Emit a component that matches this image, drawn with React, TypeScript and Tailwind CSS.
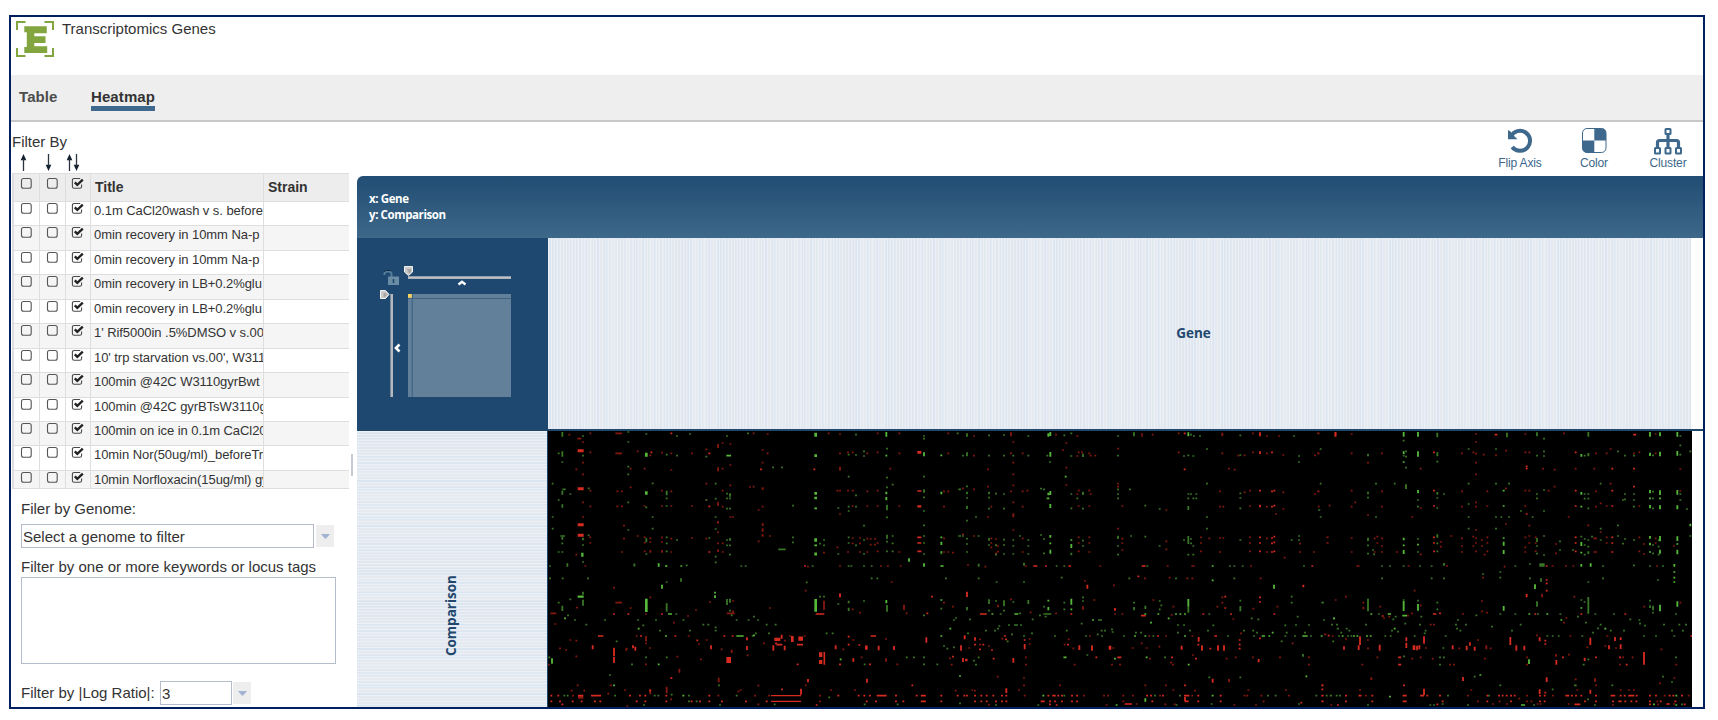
import React from "react";

const titles = [
  "0.1m CaCl20wash v s. before",
  "0min recovery in 10mm Na-p Buffer",
  "0min recovery in 10mm Na-p Buffer",
  "0min recovery in LB+0.2%glu",
  "0min recovery in LB+0.2%glu",
  "1' Rif5000in .5%DMSO v s.00",
  "10' trp starvation vs.00', W3110",
  "100min @42C W3110gyrBwt vs",
  "100min @42C gyrBTsW3110gyr",
  "100min on ice in 0.1m CaCl20",
  "10min Nor(50ug/ml)_beforeTreat",
  "10min Norfloxacin(15ug/ml) gyrA",
];

/*
 * Heatmap cells, grouped by column: "<tone><x>[*width]:<y>[/height],…".
 * Tones: R/r bright and dim red, G/g bright and dim green.
 * Units are thirds of a pixel; every block of columns has its own x origin.
 */
const blocks: { x: number; cells: string }[] = [
  {
    x: -24,
    cells: `g67:43/14,102/16,126,218/12,258/10,355/8,370,396,565/16 R122*18:92/9,206/9,314/9,346/9 r129:66,128,163,247,291 G127*7:404/12 g129:48,107,357/8,375,426,520/9,548/18 G122*18:530/7
r118*12:56 r122*16:832/9 r151:40,97,212,259,352,369 r88:44 r109:148,404 g38:191,291,326 g56:100,240,396,548 g72*10:208 g68*14:348 g91:222,538 g146:205,346 r236*20:40,100 r232:214,259 r246:214,259,396 g265:36,66,140,163,247,330 r272:146,202,564 r293:94,348 r252:317,356
r314:146,258,352,368,394 G319*8:104/12,219/10,556/40 g319:42,262,361/12,402 R334:97 r331:106,355,366,394/8,532,815/16 g338:190,291,326 r366:98,212,258,352,366,394/8 G366:500/12 g380:104,219/14,235,258,352,370,394,438,486,562/25 r394:100,150,214,258,356,396 R394:40,774 g411:48,107,360 r456:100,258,354 g450:42
r499:88,191,240,356 g499:110,240 R508:100,259,396 g508:354 r534:78/12,148/12,252/12,307/8,337,370,392/8 g527:191,236,291,327,410,427 G525:518,530/8 r548:69,146,212,260,370,396 g561:48,221,235,266,360,376,546/18 G566*14:107 g570:225/10,235,266,358/8,376,404,542/12,572 r571:72,135,196,291 r579:291,543,574 r536:780/14 g537:796
g624:40 r641:40,200 r630:201 R663:148 r668:90,128,206/8,260,314/8,330/10,346/8 r683:42,100 r656:270,364 g699:142 g726:142 r690:348,564 g726*22:388 g759:257,352,367 g604:438 g617:438
G827*8:44/12,107/8,220/8,234/8,265,360/10,376,402/9,556/38 R823:148 r866:40 R840*26:582 g840:371,530 g852:360,376,530 r852:398,556/28 r900:42,100,146/12,212,282,438 R900:526/12 g895:264,402,552 r892:212,382 r924:97,212,396 g926:104,170,260,273,352,369,438,546/8,568/10 r938:97,212,258,354,370,568 g948:44,105,226,260,376 r960:354,370,396,578 g972:94,108,317,360,402,438,543 r982:100,214,258,356,396 r992:357,374 r1005:357,374 r1013:40,97,212,258,369,394
G1039:43/14,107,219/8,236/10,545/10 g1041:86,173,202,260/12,268,292,350/12,365,394,565/20 g1058:194,348,370,394 r1078:40,100,258,396 R1138*12:97/8,213,259/7,352,369,394 G1152:103/12,435/10 g1152:48,56,170,213/10,232,273,316,348,369,402,586 G1107:420/10 r1082:438 r1051:146 g995:438,475 r1023:438 r1044:438
g30:438,475 g82:435/10 g68:475 r136:438 g283:435/9 G356:435/10 G378:438 G424:438 g440:436 g423:480/10 g144:475 r222:503 R795:438 g818:438 g800:487 r797:512 r1055:486 g934:438 r804:440 g1012:475 R1176:530
r40*18:580 G75:595 g84:586 r46:612 g105:600 g195:600 R222:582,696/25,720/18 R265:582 r236*20:548 g294:600 g310:616 r318:582,656/16,670 g348:600 R366:582 G390*12:582 g409:582 g430:600 r402:608 g139:614 R182*16:648 G296:626 g490:614 g505:614 g527:622,632 r444:588 r468:570 r510:546 r572*24:580 g590:600 g575:586 g626:600 g642:590 g654:600 g680:614 g707:614 r690:564 g360:632 g450:632 g648:640 g687:640 G378:648 G600*22:648 R553:648 R578:648 r290:648 R303:648 R406:648 r446:648 g638:648 G642:646
r91:660 r109:662 R158:682/12 r60:685 r78:690 r109:709 r111:563 g230:664 R279:680/9 R286:686/12 r260:686 r258:690 r330:684 R472:661 r477:672 R513:682/12 r500:660 R621:656/9,684/12 r545:688 r575:694/10 r623:706 R566*14:720/18 R700:684/16 R712*18:658/10 R725:650/12 R734:684/14 R757*8:657/18 R782*14:656/13 R708:670 R718*18:674 R780*18:674 r735:662 r750:648 r672:670 r794:648 R842*10:704/14,726/12 R853*5:715/38 R887:682/12 R979*8:683/13 R1016:684/14 R926:650,674 r940:660 R958:675 r910:688 r1038:657,720/10 g860:640 g878:640 R1000*16:648 R1159:660/16 r1092:562/16 R1062:684/12 r1100:580 R1162:580
G36:723/16 g28:712 r27:734 R55:827 g73:827 g83:827 r99:827 R34:827,844 R122*16:827 R168*30:827 g225:827 R270:827 R300:827 R316:827,844 g344:827 g355:827 R379:827,844 g395:824 r380:810/20 r393:838 G430:827 g447:827,844 g470:844 R508:827,844 r535:827 g590:827 R618:844 r645:827 R738*90:827/4,844/4 R783:815/18 R726:808 r687:827 R60:844 R98:844 R125:844 R165:844 R181:844 R290:844 R455:844 R480:844 R546:844 R680:844 r840:827,844 R895:827 R956:827 R973:827 R990:827 R1025*30:827 R1068:827,844 R1090:844 R1130:827 R1150*15:827,844 R980:844 R1008:844 R830:855 g540:855 g312:855 R67:853 r655:853 g704:853 r262:858 g974:853 g1073:853
g210:765 r418:752/12 r394:774 G222:796 r213:796 r113:796 r205:821 r255:810 r133:812 r95:812 R330:812 r655:797 R804:782/10 R981:782/12 r797:796 R1117:796 r602:810 r595:814 r873:810 g868:832 r945:810 G356:733 g380:712 r318:733 g276:733 g318:712 r483:718 R773:733 R900:733 G902:718 R940:720/10 r965:712 R990:733 g1152:712,733 g1100:712 g1122:712 g974:733 r412:710 r1072:733 g1192:733`,
  },
  {
    x: 1176,
    cells: `G4:106,219/8,352,370/10,396,540 g4:400,566 r12:214,260,355,396,548 g81:45/10,103/12,199,219/8,234,262/10,302,356,372,396,566/10 R81:523/16 r25:40,100,214,396 r39:398,560 g53:40 g69:107,348 g59*8:208,348 r69:205,343 r102:48,107,208,348 g108:291 g116:348,434,475 g147:46,107,219/8,233,266,358/8,375,545/14,572 r144:148,200,291 r154:260,355,369,382 r168:357,375,400 g168:221,376,404,543 r174:378,395,558/8 g192:45,107,222,266,359,375,402,550/18,572 r213:43/12,100,214,538 r220:66,128,163,196,247,286/12,330 g220:107,360,378,402,546 g240:348 r248:100,214,260,355,396 g252:433/9,486 g265:48,107,360,378,402,546/12 r262:212
g303:206,345 g312:208,357,400,560 G325:45/10,222/8,235,542,566/10 G331:42/12,103/14,219/12,258/12,349/8,370,395/12 g322:107,235 g330:126 r348:44 g373:46,548,568 r369:90 r379:69,143,195 G377:170 g394:40,108,222,265,402/8 G394:378/12,360,545/18,568 r412:48,108,222 g412:235 r416:97,212,258,352,369,394 g429:106/10,220/10,266,362,378,532,543 r429:564/10 r426:97 r448:100,212,258,352,369,396 r452:107,222 r466:107
g534:48,107,208,222,235,352/10,378,404 r534:86,191,200,326 g570:208 g573:348 r547:258,356,369,390 g582:43/12,548,566/10 r606:42,48 r638:44 g616:257,350,562/10 r679:270,364,388 g659:267,378,543,568 r716:40,97 R734:40,148 G745:43/12,548/22 g745:106,222,235,264/12,360/24,404,566/16 g753:44,222,357,370 g760:108,235,378,404 g769:222,235 g762:48 g780:48 r783:352,369,394 g732:108,360 g801:87,191,291,326 r808:355 r847:43/10,100,532,548 r840:214,260,354,396 r850:260,354 g901:46,105,220,234,265,360,542,566/16 r867:146 r884:149 r895:107 r914:106,217
r939:40,97 r930:212,258,352,369,394 R960:43/12,98/8,258/8,352,369,394,532,546 R960:212 r981:48,100,260,355,396 R996:97,214,260,354,370,396 R1003:212,257,350,367,394 r1017:48 r1030:105,217,267 r1008:282 g1062:48 g1077:108,126,348,360 r1080:371,396 r1134:40,100,214 r1125:106,222 g1142:87,191,291 g1137:270 R1187:43/12 r1169:257 r1162:352,369 r1122:396 r1034:413 g1055:360,530,548 r1187:540
G6*10:438 r84:435 g116:438 r136:440 r258:438 R286*12:438 R318:438 g350:438 g373:438 R389*8:438 r481:438 R611*12:438 g622:438 r683:438 r759*10:438 G818:438,481 g870:438 g883:438,475 g908:438 r933:438 g1092:438 R1117:438 g18:475 g170:486 g365:473 r435:483 R442:500/12 r522:496 g568:475 R595:469 r615:475 r689:473 g708:475 r742:475 r757:475 r962:475 G1002:500/12 R1090:498/8
R525:568/8 r463:540 r640:540 g664:556 r700:560 g745:576 R856:530,564 r832:560 g1147:548 r1012:560 R130*20:582 G157:582 g182:582 G229*12:582 g240:580 r272:577 g300:586 g322*24:582 r348:580 R394:582 r525:582 r547:582 R610*14:587 G616:582 G655:582 G708:582 G721:582 G735:582 r695:585 R790:582 g808:582 R873:582 g820:616 G686:595 g42:600 g48:594 g90:598 g278:598 g317:590 G459:600 g480*12:600 G633:608 r880:597 g935:595 r940:566 g955:598 R1003:582 g1073:590 g1182:595 g1152:600 G31:626 g178:618 g174:626 g228*12:615 g207:615 g243:615 g425:611 g714:615 g732:615 g1036:616 g1068:615 g1107:615 g1193:626
g84:640 g138:632 g165:632 g276:640 g380:632 g485:632 g495:632 g516:628 g518:636 g588:638 g603:638 g714:638 g750:632 g804:632 g912:632 g940:632 g951:638 G998:638 g1040:638 g1095:638 g216:643 G4:648 g252:648 g345:648 g438:648 r450:648 g473:643 g486:648 g552:648 G585:648 G616:648 r628:648 g640:648 R654:648 r678:648 G735:648 R827*8:648 g864:648 g942:648 G970*10:648 G988:648 g1036:648 g1065:648 G1095*16:648 g1113:648 r1155:643 r1178:648 r757:648 r903:640
R74:652/12 R105:657/10,674 r120:658,674 R63:684/16 R120:688 g12:678 g22:686 g42:682 r88:684 r147:678 R130:674 R156:690 r187:656 R195:648 R198:658 g203:664 R254:660,680/16 r269:657,672 r386:658 R384:674 r374:674 r400:685 R418:683/14 R456:684/16 R510*8:683/12 r520:684 r578:684 r605:670 r620:684 r658:680 R725:683/12 R776:658/14 R775:674 R786:684/16 R811:686 R834:684/16 R852:684/16 R899:660,674,686 R960:655 g1025:664 r1058:670
R69:720/12 R79*7:720/8 r30:715 R39:710 r35:734 g102:722 g108:734 g116:712 R161:716 R220:721/14 r258:712,734 G375*9:712 g442:705 R469:712 r404:734 G525:716 R538*12:712 r516:734 r540:734 G620:712 r630:716 g675:712 R696:712 r693:728 r699:734 G746:734 R768:716 r759:705 r860:716 r887:712 r939:712 R956:722/10 r1020:712 g1089:706/8 r1107:712,734
G60:768 r173:770 r252:774,796 r360:796 R818:782/12 r867:782/10 g808:772 g901:772 G1099:769 r616:796 r678:796 R735:796 R1147:796,808 r47:812 r97:810 r105:812 R199:812/14 r237:810 r700:810 r765:812 r925:810 r1038:810
R4:827,844 R53:827 R73:827 R81:827 R105:827,844 R124:827,844 R140:827,844 R160:827 R186:827 R199:827,844 r254:827 G310:827 R325:827 R342*10:827 R355:827 R366:827 g373:827 R396:827,844 R411:827,844 r432:827 r492:827 r504:827 r550:827,844 r579:827 R621:827 R633:827 g645:827 r660:827 R669:827 g720:827 R740*16:827 r757:827 R775:827,844 G818:827 R842:827,844 r914:827 r922:827 r964:827 g984:827 g1007:827 r1047:827 g1129:827 R1147:827,844 g1160:827 g1172:827 g1190:827 R168:844 R186:844 R308*12:844 R330:844 R345:844 R366:844 G616:840/10 R637:844 R735:837/12 R740*12:844 r971:844
g60:850 r147:854 g168:855 R330:853 R350:855 g295:855 r500:855 G530:855 R565*22:852 r590:852 r676:853 r704:853 g710:855 g815:852 r883:855 r948:855 g1077:852 R1084:848 r1174:855 R1194:855`,
  },
  {
    x: 2310,
    cells: `R52:43/14 r2:40,100,214,260 g8:87,191,291 g4:270 r35:257 r29:352,369 r101:42,100,212,260,354,396 r112:247 g150:105/8,219/8,233,358/10,376,401,555/38 r150:128,285 r170:355,396 g174:191,291 r178:350,369 r192:100,214,260,355,378,396 g168:403 g165:390 g192:438,475 g230:191 G257:43/14,98/8,126,357/8,376,396/12,558/30 g257:62,107,438,540 g264:94,110,143,200/14 r237:396 r283:291 r308:146,264,403 G300:43/14,102/16,215/10,374,562/20 g300:240,260,357,396,542 g306:438 g341:438 R348:97,212,258,352,369,394
g358:45/14,103/12,125,220/8,234,264,348/10,370,394,548,568 r369:366,380 g378:222,433/8,475 r387:438 r400:348 r432:100,214,260,355,378,396 g452:87,191,252,291,326 r466:97,350,378 r474:42,66,101,128,163,247,260,330,354,369,394 r497:104 r508:214,258,352,369,394 r492:360,378,543,574 r500:404 R534*8:44 g534:87,191,291,326 r534:106 r564:92,205,312 G557:212,258,354,371/12,396/12,565/14 g567:45/14 g550:291 g573:191,291 g592:438 r560:440 g609:273 g547:456,473 g495:462 r495:473
r622:42,97,212,258,352,382,396 R626:139,146,282,527/10 g657:43/12,107,222,235,360/12,378,401,552/16 r634:97,212,317,348,369 r653:352,369,394 g636:432,475 g644:291 g678:56,94,108,210,273,348,405 r675:146 r710:149,200 r692:212 r714:372,400 g726:364,390 r738:40 R686:438,480,490,512 r704:438 r744:438 r766:438 g672*16:435/10 g669:480/10 G651:500/14 r672:527/10 r752:291 g765:390
R773:97,212,258,352,369,394 r773:146 G790:106/8,220/8,260,372/12,398,436/8,564 g790:350,540 g800:107,222,236,357,375,404,546 g811:43/14,104/10,222,236,265,360,380,398/8,486,556/50 G818:435/10 r811:316 r829:146,355,396 r834:100,214,260,355,396 g822:350 g848:191,326,360 r848:250,336 r866:100,258,352,369 R883:146,212,258,352,369,396 r878:87,191 g855:438,475 g900:94,316,348 g921:107,222,238,357 g915:240,371 R950*9:44 R948:146,200 r948:100 g948:107,222,240,260,360,436 r964:97,258,352,394 r978:372,402
G996:43/14,103/10,215/10,235,260/10,352/8,372/8,396 g1005:106,215,235,265,375,400,564/14 g996:438,542,560/8 r1013:42,100,355,369 G1026:43/12,102/14,218/14,235,262/12,356/16,395/12,564/20 g1022:360,380,404 g1020:480 r1017:438 g1035:438 G1078:43/14,100/14,217/14,262/12,356/14,372,396/14,552/16 g1087:48,76,104,222,240 r1087:147,213,548 g1107:267 G1117:315/8 g1117:94,348 r1068:378 G1069:436/8,456,473,486
r118:438 r122:438 g216:438 r272:438 r84:530 r136:548,564/8 r187:560 r290:512 r308:556 r769:530 r979:560 g341:475 g15:548
g18:600 G48:595 g42:614 g57:614 g60:626 g86:626 g94:632 r22:643 R32:647 g70:638 G11:648 g63:648 G74:648 g90:648 g100:648 G108:648 G118:648 G147:648 G158:648 g202:648 g218:648 g144:614 G160:582 g183:582 G214*10:582 R194:588 r198:594 r214:590 g233:590 g226:598 G230:626 g222:632 g240:635 G260*14:587 g262:611 r270:587 r282:580 g310:590 g306:614 R350*10:582 R366:580 g323:632 r338:614 r348:614 R318:660/22 g290:648 g320:640 g383:648 g414:614 g420:600 g417:626 g427:632 r435:582 g444:614 g475:586 r507:578 g522:620 g547:582 g592:582 g582:632 g608:614 G634:582 R652:582 g660:582 G688:582 g727:582 G730:600 r738:608 r745:594 g804:608 g780:590 R790:582 g832:582 G862:626 g848:614 g840:625 g878:632 R922:582 g888:582 g918:632 g937:598 g964:600 g966:611 g981:617 g1005:578 g1038:614 g1062:632 g1074:582 g1084:614 g1104:614 g1095:632 g825:638 r657:646 g688:648 g704:648 g722:648 r757:648 g793:648 r868:648 g978:648 g1014:648 g1069:648 R1120:648
R126:662/26 R122:683/14 g46:664 r84:657 R78:684/10 r150:660,685 R185:683/18 R265:658/12,676/16 R288*8:683/14 R297:684/14 R304:682/12 r324:684 g376:684 R404:682/12 r424:685 R446:684/14 R456:672/10 R470:686/12 r480:660 r505:682/12 r518:685 R577:663/24 R595:684/16 R619:684/14 R665:658/12 R682:662,672 r714:706/8 R817:664/22 r808:682 R873:682/12 R891:657/12 R908:656/8,680/14 r862:678 r894:684 R978:715/38 r1030:688
r133:734 r178:712 R245*9:712,734 g258:709 r283:716 r308:712 r344:716 g366:712,734 g378:712 r396:734 r408:734 r501:716 r627:712,734 G633:725/14 R715:727/14 R735:712 r753:704 R800:718/10 g811:718 R834:712 g797:734 R906:712 r906:734 R926:734 r915:712 r944:712 g1074:712 r1075:734
r160:776/8 r14:796 g470:770 G487:765 R435:777/12 R686:779/14 R258:796 r126:810 R318:816/20 R665:815/14 R682:818 r460:810 g547:796 g704:808 r773:778 r831:780/12 g772*8:796 r834:796 g883:796 R817:815/12 r908:810 g1035:770 r1069:774 r1026:790 g1062:786 r778:810 r933:810 r948:810
R14:827,844 g26:827 g39:827 g66:827 R84:827,844 R126*9:827 r144:827 R163:827,844 G216:830 R260*12:827,844 R312*12:827 R328:827 R366:827 R374:844 g390:827 r450:827 r480:844 R508:827,844 g513:827 R543:827 R554:827 R566:827 R579:827,844 R590:827 r545:844 r604:836 r627:827,844 r640:844 R666:827,844 R680:827,844 r705:827 R748*12:827 R762:827 R774:827 R790:827 R801:844 g810:838 R834:827,844 R885*14:827 R908:827,844 R920:827 R940*18:827 R956:827 R885:844 R905*8:844 R922:844 R940:844 R955:844 R996:827,844 R1014:827 R1028:844 r1040:827 R1055:827 R1066:827 G1075:827 R1092:827 r1112:827 R1072:844 r1018:844
g150:855 g337:855 g348:855 R358:853 g374:852 g450:855 r525:852 r567:852 G615*12:855 g648:855 r659:852 r668:852 r752:852 R778*18:853 g831:855 r885:855 R996:853 G1008:853 r1020:853 R1050*10:852 r1068:852 G1075:855 g1092:853 R1100:853`,
  },
];

const tones: Record<string, string> = {
  r: "#84190f",
  R: "#d62b20",
  g: "#387526",
  G: "#56b83b",
};

function buildPaths() {
  const paths: Record<string, string> = { r: "", R: "", g: "", G: "" };
  for (const block of blocks) {
    for (const column of block.cells.split(/\s+/)) {
      const [head, list] = column.split(":");
      const tone = head[0];
      const [cx, w] = head.slice(1).split("*").map(Number);
      const width = w || 5.5;
      for (const cell of list.split(",")) {
        const [cy, h] = cell.split("/").map(Number);
        const height = h || 5;
        paths[tone] += `M${block.x + cx - width / 2} ${cy - 33 - height / 2}h${width}v${height}h${-width}z`;
      }
    }
  }
  return paths;
}

const paths = buildPaths();

function Heatmap() {
  return (
    <svg className="block h-[276px] w-[1144px] bg-black" viewBox="0 0 3432 828">
      {Object.keys(tones).map((tone) => (
        <path key={tone} d={paths[tone]} fill={tones[tone]} />
      ))}
    </svg>
  );
}

/* Axis label background made of hairlines of slightly different blues. */
function Stripes({ vertical }: { vertical?: boolean }) {
  const count = vertical ? 1143 : 276;
  const shades = ["#dde6f0", "#e7ebf2", "#e6e9ed", "#d9e5f1", "#e4eaf2", "#e0e7ef", "#e4e9f1"];
  const lines = [];
  for (let i = 0; i < count; i++) {
    const shade = i % 3 === 0 ? "#ebf0f6" : shades[(i * 5 + ((i * i) >> 4)) % 7];
    lines.push(
      vertical ? (
        <rect key={i} x={i} y={0} width={1} height={192} fill={shade} />
      ) : (
        <rect key={i} x={0} y={i} width={191} height={1} fill={shade} />
      ),
    );
  }
  return (
    <svg
      className="col-start-1 row-start-1 block"
      width={vertical ? 1143 : 191}
      height={vertical ? 191 : 276}
      shapeRendering="crispEdges"
    >
      {lines}
    </svg>
  );
}

function Box({ checked }: { checked?: boolean }) {
  return (
    <svg className="block" width="14" height="13" viewBox="0 0 14 13" fill="none">
      {checked ? (
        <>
          <path
            d="M9.2 1.5H3.2Q1.4 1.5 1.4 3.3V9.4Q1.4 11.2 3.2 11.2H8.8Q10.6 11.2 10.6 9.4V7.6"
            stroke="#4a4a4a"
            strokeWidth="1.1"
          />
          <path d="M3.8 5.4L6.3 7.9L11.8 2.6" stroke="#222" strokeWidth="2.3" />
        </>
      ) : (
        <rect x="1.5" y="1.5" width="9.7" height="9.7" rx="2" stroke="#555" strokeWidth="1.1" />
      )}
    </svg>
  );
}

function Arrow({ down }: { down?: boolean }) {
  return (
    <svg className={down ? "block rotate-180" : "block"} width="7" height="17" viewBox="0 0 7 17">
      <path d="M3.5 0L6.3 6.2H.7z" fill="#14202e" />
      <path d="M3.5 5V17" stroke="#2b3440" strokeWidth="1.3" />
    </svg>
  );
}

function Dropdown() {
  return (
    <div className="flex h-[22px] w-[18px] items-center justify-center bg-[#eeeeee]">
      <svg width="9" height="5" viewBox="0 0 9 5">
        <path d="M0 0H9L5.5 4.2Q4.5 5 3.5 4.2z" fill="#a3b4d3" />
      </svg>
    </div>
  );
}

function Navigator() {
  return (
    <svg className="block" width="191" height="191" viewBox="0 0 191 191">
      <path d="M27.5 37V35.5Q27.5 33.5 31 33.5Q34.5 33.5 34.5 36V39" fill="none" stroke="#557c9a" strokeWidth="2" />
      <path d="M27 33.5Q28.5 32 34 32.5" fill="none" stroke="#15304c" strokeWidth="1" />
      <rect x="31" y="38.5" width="11" height="8.5" fill="#6b8ca5" />
      <path d="M36.5 41V45" stroke="#1e486f" strokeWidth="1.6" />
      <rect x="51" y="38.3" width="103" height="2.6" fill="#bfc1c4" />
      <path d="M47.5 28.5H55.5V34L51.5 37.5L47.5 34z" fill="#c9c9c9" stroke="#f2f2f2" strokeWidth="1" />
      <path d="M50 31H54V34L52 35.5z" fill="#a5a5a5" />
      <path d="M101.5 46.5L105 43.8L108.5 46.5" fill="none" stroke="#fff" strokeWidth="2.4" />
      <rect x="33.4" y="56" width="2.6" height="103" fill="#b4b8bd" />
      <path d="M23.5 52.5H28.5L32 56.5L28.5 60.5H23.5z" fill="#c9c9c9" stroke="#f2f2f2" strokeWidth="1" />
      <path d="M26.5 55H28.5L30 56.8L28 59H26.5z" fill="#a5a5a5" />
      <path d="M42.5 106.5L39 110L42.5 113.5" fill="none" stroke="#fff" strokeWidth="2.6" />
      <rect x="51" y="56" width="103" height="103" fill="#62809a" />
      <path d="M51 60.5H154M55.2 56V159" stroke="#3f6585" strokeWidth="1.2" />
      <rect x="51" y="56" width="3.8" height="3.8" fill="#f7d35c" />
    </svg>
  );
}

function Tool({ label, children }: { label: string; children: React.ReactNode }) {
  return (
    <div className="flex w-[74px] flex-col items-center text-[12px] leading-[14px] tracking-[-0.15px] text-[#3c678b]">
      <svg width="30" height="28" viewBox="0 0 30 28" fill="none">
        {children}
      </svg>
      <span className="mt-px whitespace-nowrap">{label}</span>
    </div>
  );
}

export default function App() {
  return (
    <div className="h-[720px] w-[1718px] overflow-hidden bg-white pl-[9px] pt-[15px] font-['Liberation_Sans',Arial,sans-serif] text-[#333]">
      <div className="flex h-[694px] w-[1696px] flex-col overflow-hidden border-2 border-[#002060]">
        <header className="flex h-[58px] shrink-0 pl-[5px] pt-[4px]">
          <svg width="38" height="37" viewBox="0 0 38 37">
            <path
              d="M1 9V1H9.5M28.5 1H37V9M37 27V35H28.5M9.5 35H1V27"
              fill="none"
              stroke="#82a53f"
              strokeWidth="2"
            />
            <path
              d="M8.3 5.3H30.8V12.3H18.3V15.300H29.500V22H18.300V25.200H31.200V32H8.300V26H10.800V11.300H8.300z"
              fill="#82a53f"
            />
          </svg>
          <h1 className="-mt-px ml-[8px] text-[15px] leading-[17px]">Transcriptomics Genes</h1>
        </header>
        <nav className="flex h-[47px] shrink-0 border-b-2 border-[#c8c8c8] bg-[#eeeeee] pl-2 pt-[13px] text-[15px] font-bold leading-[18px]">
          <span className="w-[72px] tracking-[0.1px] text-[#4c4c4c]">Table</span>
          <span className="h-[23px] border-b-[5px] border-[#3e688c] tracking-[0.1px]">Heatmap</span>
        </nav>
        <div className="flex min-h-0 flex-1">
          <aside className="w-[345px] shrink-0 pl-px pt-[11px]">
            <div className="text-[15px] leading-[18px]">Filter By</div>
            <div className="flex h-[22px] pl-2 pt-[3px]">
              <Arrow />
              <div className="ml-[18px]">
                <Arrow down />
              </div>
              <div className="ml-[14px] flex">
                <Arrow />
                <Arrow down />
              </div>
            </div>
            <div className="grid h-[316px] w-[337px] grid-cols-[26px_26px_25px_173px_85px] grid-rows-[28px_repeat(12,24.45px)] overflow-hidden border-b border-l-2 border-t border-[#dedede]">
              {["pl-[6px]", "pl-[6px]", "pl-[5px]"].map((pad, i) => (
                <div key={i} className={`border-b border-r border-[#dedede] bg-[#ededed] pt-[3px] ${pad}`}>
                  <Box checked={i === 2} />
                </div>
              ))}
              <div className="border-b border-r border-[#dedede] bg-[#ededed] pl-[4px] pt-[5px] text-[14px] font-bold leading-[17px]">
                Title
              </div>
              <div className="border-b border-[#dedede] bg-[#ededed] pl-[4px] pt-[5px] text-[14px] font-bold leading-[17px]">
                Strain
              </div>
              {titles.map((title, row) => {
                const shade = row % 2 ? "bg-[#f5f5f5]" : "bg-white";
                return (
                  <React.Fragment key={row}>
                    {["pl-[6px]", "pl-[6px]", "pl-[5px]"].map((pad, i) => (
                      <div key={i} className={`border-b border-r border-[#dedede] ${pad} ${shade}`}>
                        <Box checked={i === 2} />
                      </div>
                    ))}
                    <div
                      className={`overflow-hidden whitespace-nowrap border-b border-r border-[#dedede] pl-[3px] pt-px text-[13px] leading-[15px] tracking-[-0.06px] ${shade}`}
                    >
                      {title}
                    </div>
                    <div className={`border-b border-[#dedede] ${shade}`} />
                  </React.Fragment>
                );
              })}
            </div>
            <div className="pl-[9px] text-[15px]">
              <div className="pt-[11px] leading-[18px]">Filer by Genome:</div>
              <div className="mt-[6px] flex items-center gap-[2px]">
                <div className="h-6 w-[293px] border border-[#b5bdcc] pl-px leading-[23px]">Select a genome to filter</div>
                <Dropdown />
              </div>
              <div className="mt-[10px] leading-[18px]">Filter by one or more keywords or locus tags</div>
              <div className="mt-px h-[87px] w-[315px] border border-[#b5bdcc]" />
              <div className="mt-[17px] flex items-center">
                <span className="w-[139px] leading-[18px]">Filter by |Log Ratio|:</span>
                <div className="h-6 w-[72px] border border-[#b5bdcc] pl-px leading-[24px]">3</div>
                <div className="ml-px">
                  <Dropdown />
                </div>
              </div>
            </div>
          </aside>
          <div className="flex w-px shrink-0 flex-col">
            <div className="-ml-[5px] mt-[332px] h-[22px] w-[2px] bg-[#c5cad5]" />
          </div>
          <main className="flex min-w-0 flex-1 flex-col">
            <div className="-mr-[2px] flex h-[54px] shrink-0 justify-end pt-[5px]">
              <Tool label="Flip Axis">
                <path d="M6 9.500A10 10 0 1 1 7.200 20" stroke="#3e688c" strokeWidth="4" />
                <path d="M3 3L5.500 4.500L7.500 7.500L12.500 12.200H3z" fill="#3e688c" />
              </Tool>
              <Tool label="Color">
                <rect x="3.500" y="1.500" width="23.500" height="24" rx="4.500" stroke="#3e688c" />
                <path
                  d="M15.300 1.500H22.500Q27 1.500 27 6V13.600H15.300zM3.500 13.600H15.300V25.500H8Q3.500 25.500 3.500 21z"
                  fill="#3e688c"
                />
              </Tool>
              <Tool label="Cluster">
                <g stroke="#3e688c" strokeWidth="2">
                  <rect x="12.500" y="2" width="5" height="5" rx=".5" />
                  <rect x="2" y="21" width="5" height="5.500" rx=".5" />
                  <rect x="12.500" y="21" width="5" height="5.500" rx=".5" />
                  <rect x="23" y="21" width="5" height="5.500" rx=".5" />
                  <path d="M15 7.500V20.500M4.500 20.500V15.500Q4.500 13.500 6.500 13.500H23.500Q25.500 13.500 25.500 15.500V20.500" strokeWidth="3.200" />
                </g>
              </Tool>
            </div>
            <div className="h-[62px] shrink-0 rounded-tl-md bg-linear-to-b from-[#224d74] to-[#3d6889] pl-[12px] pt-[15px] font-['Open_Sans','Noto_Sans',sans-serif] text-[11.5px] font-bold leading-[15.5px] tracking-[-0.4px] text-white">
              <div>x: Gene</div>
              <div>y: Comparison</div>
            </div>
            <div className="flex h-[193px] shrink-0 border-b-2 border-[#1f486b]">
              <div className="w-[191px] shrink-0 bg-[#1e486f]">
                <Navigator />
              </div>
              <div className="grid w-[1143px] shrink-0 place-items-center">
                <Stripes vertical />
                <span className="col-start-1 row-start-1 pl-[148px] font-['Open_Sans','Noto_Sans',sans-serif] text-[13.5px] font-bold text-[#22486e]">
                  Gene
                </span>
              </div>
            </div>
            <div className="flex shrink-0">
              <div className="grid w-[190px] shrink-0 place-items-center">
                <Stripes />
                <span className="col-start-1 row-start-1 mr-[3px] mt-[94px] rotate-180 font-['Open_Sans','Noto_Sans',sans-serif] text-[13.5px] font-bold text-[#22486e] [writing-mode:vertical-rl]">
                  Comparison
                </span>
              </div>
              <div className="border-l border-[#1f486b]">
                <Heatmap />
              </div>
            </div>
          </main>
        </div>
      </div>
    </div>
  );
}
